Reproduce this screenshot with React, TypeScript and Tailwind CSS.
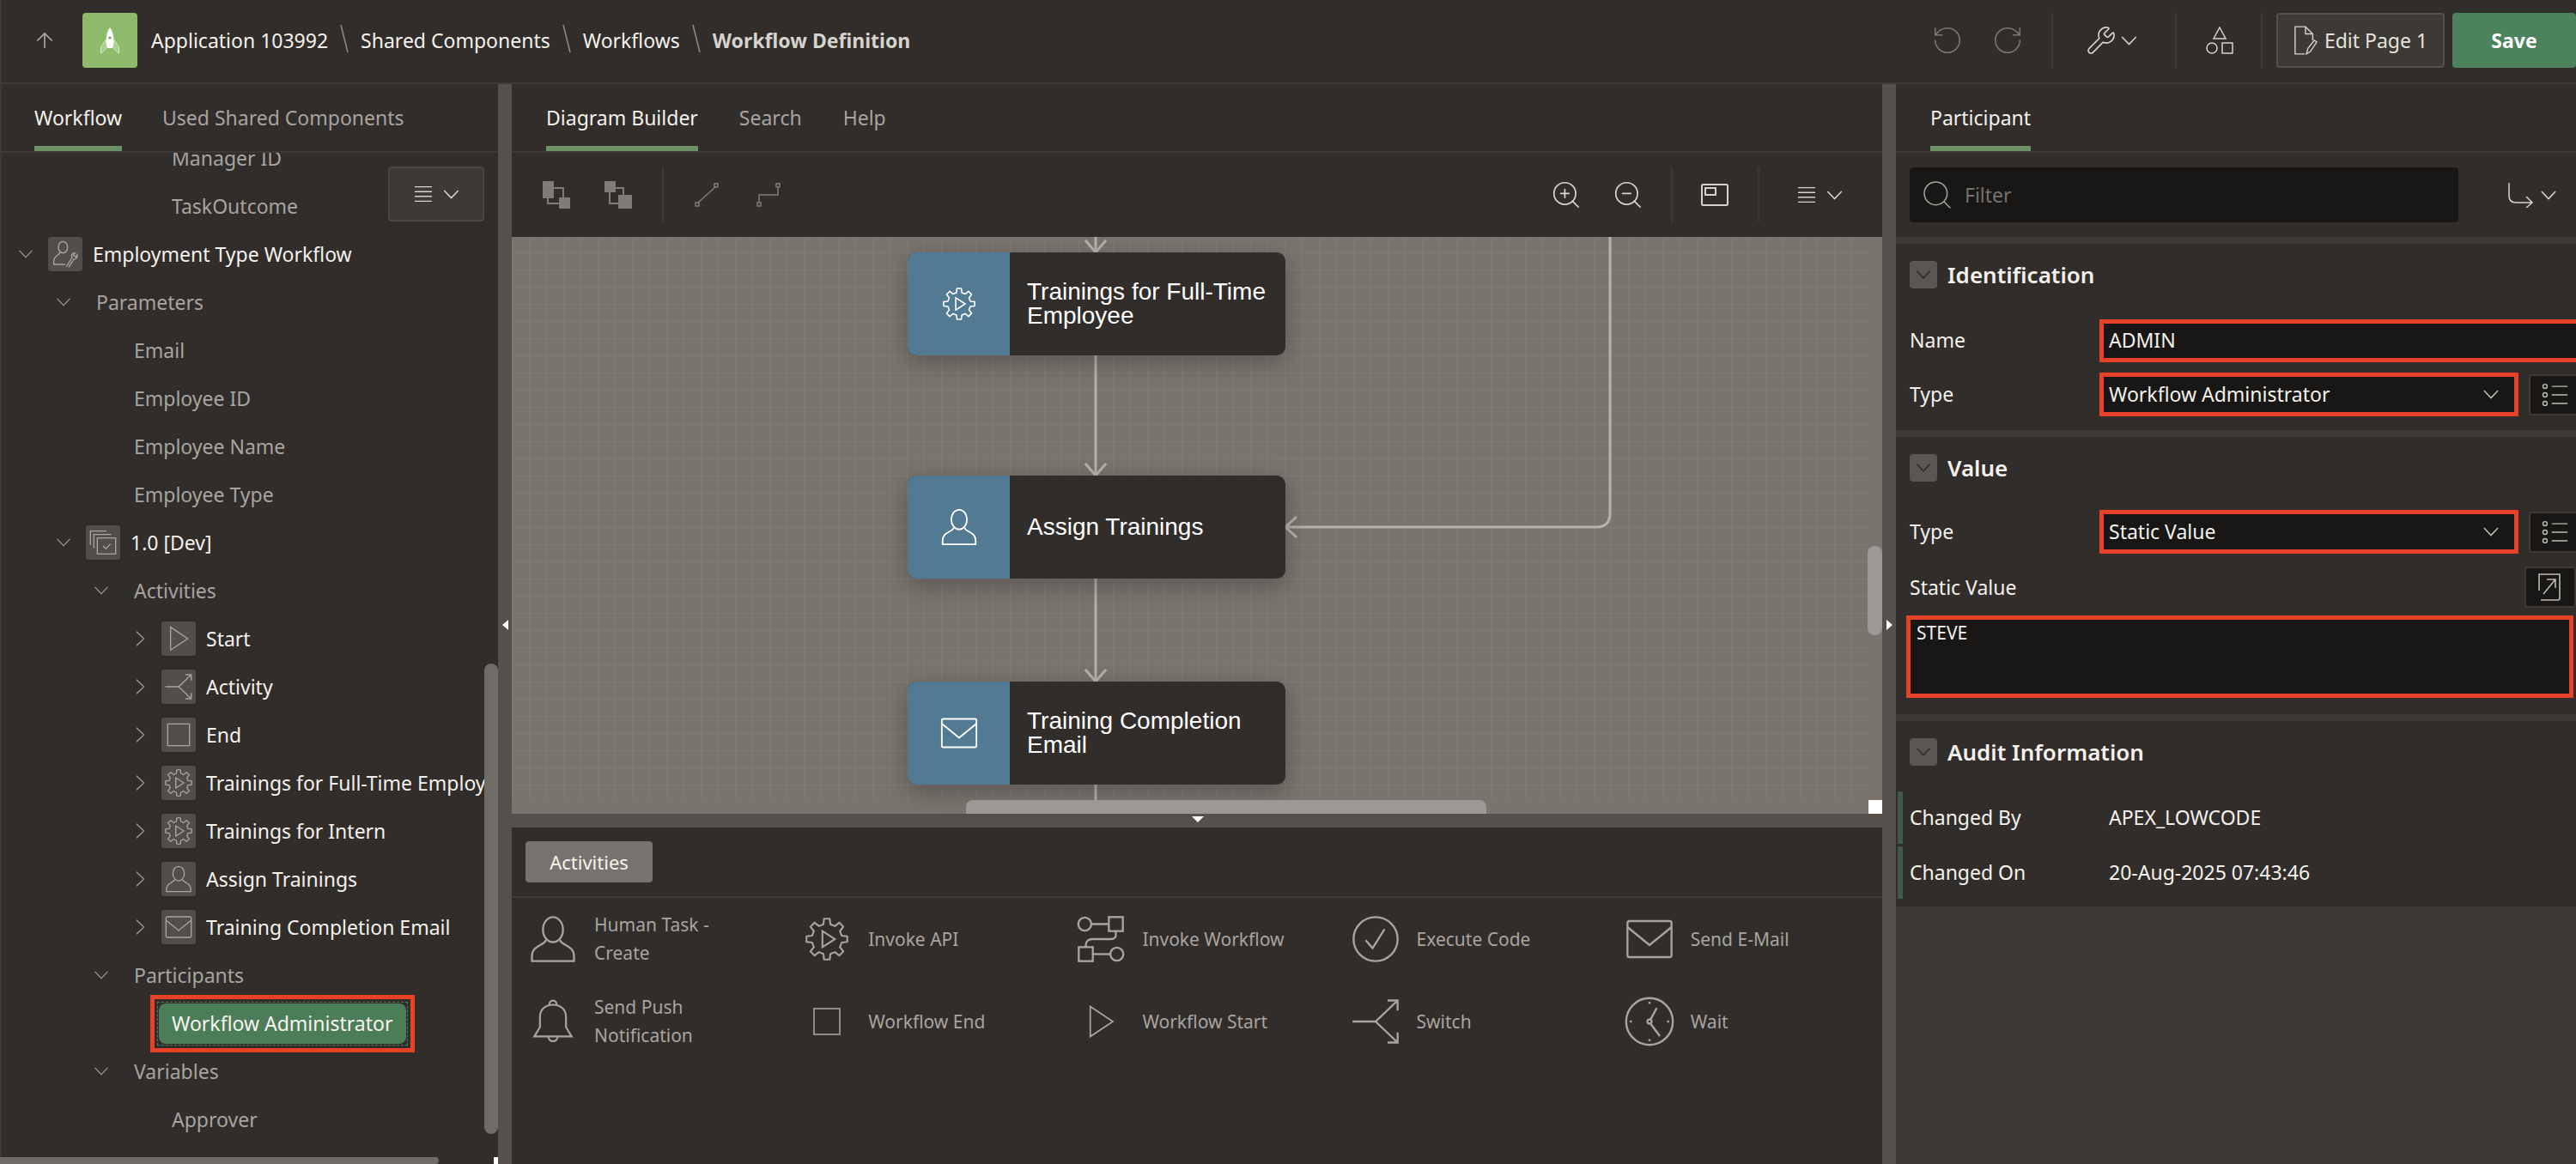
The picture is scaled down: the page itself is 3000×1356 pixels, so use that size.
import { ArrowUp, RotateCcw, RotateCw, Search, Wrench, ZoomIn, ZoomOut } from "lucide-react"
import type { ReactNode } from "react"

type IconProps = { className?: string }

function Svg({ className, box = 48, children }: IconProps & { box?: number; children: ReactNode }) {
    return (
        <svg viewBox={`0 0 ${box} ${box}`} fill="none" stroke="currentColor" strokeWidth="2" className={className}>
            {children}
        </svg>
    )
}

const ChevDown = ({ className = "w-[20px] h-[12px]" }: IconProps) => (
    <svg viewBox="0 0 20 12" fill="none" stroke="currentColor" strokeWidth="1.700" className={`shrink-0 ${className}`}>
        <path d="M1 1 L10 10.500 L19 1" />
    </svg>
)
const ChevRight = ({ className = "w-[12px] h-[20px]" }: IconProps) => (
    <svg viewBox="0 0 12 20" fill="none" stroke="currentColor" strokeWidth="1.700" className={`shrink-0 ${className}`}>
        <path d="M1 1 L10.500 10 L1 19" />
    </svg>
)

// 8 tooth gear outline, same shape in tree, node and palette
function gearPath() {
    const pts: string[] = []
    for (let i = 0; i < 8; i++) {
        const a = (i * Math.PI) / 4 - Math.PI / 2
        const step = Math.PI / 4
        const add = (r: number, t: number) => pts.push(`${(24 + r * Math.cos(a + t)).toFixed(1)} ${(24 + r * Math.sin(a + t)).toFixed(1)}`)
        add(23, -0.14)
        add(23, 0.14)
        add(17, step / 2 - 0.16)
        add(17, step / 2 + 0.16)
    }
    return "M" + pts.join("L") + "Z"
}

const GearPlay = ({ className }: IconProps) => (
    <Svg className={className}>
        <path d={gearPath()} strokeLinejoin="round" />
        <path d="M19 15 L33 24 L19 33 Z" />
    </Svg>
)
const Person = ({ className }: IconProps) => (
    <Svg className={className}>
        <ellipse cx="24" cy="14.5" rx="10" ry="12.5" />
        <path d="M17 25 C15 31 3 30 3 41 V46 H45 V41 C45 30 33 31 31 25" />
    </Svg>
)
const Mail = ({ className }: IconProps) => (
    <Svg className={className}>
        <rect x="2" y="6" width="44" height="36" rx="2" />
        <path d="M2 12 L24 30 L46 12" />
    </Svg>
)
const Triangle = ({ className }: IconProps) => (
    <Svg className={className}>
        <path d="M10 4 L40 24 L10 44 Z" />
    </Svg>
)
const Split = ({ className }: IconProps) => (
    <Svg className={className}>
        <path d="M1 24 H24 L46 3 M24 24 L46 45 M36 3 H46 V13 M46 35 V45 H36" />
    </Svg>
)
const Flow = ({ className }: IconProps) => (
    <Svg className={className}>
        <circle cx="8" cy="9" r="6.5" />
        <rect x="32" y="2" width="14" height="14" />
        <path d="M14 9 H32 M39 16 V20 C39 23 37 24 34 24 H16 C12 24 9 26 9 30 V32" />
        <rect x="2" y="32" width="14" height="14" />
        <circle cx="40" cy="39" r="6.5" />
        <path d="M16 39 H34" />
    </Svg>
)
const CheckCircle = ({ className }: IconProps) => (
    <Svg className={className}>
        <circle cx="24" cy="24" r="22" />
        <path d="M14 25 L21 33 L33 14" />
    </Svg>
)
const Bell = ({ className }: IconProps) => (
    <Svg className={className}>
        <path d="M4 40 L10 30 V19 C10 11 16 6 24 6 C32 6 38 11 38 19 V30 L44 40 Z" />
        <path d="M20 6 C20 0 28 0 28 6 M19 40 C19 47 29 47 29 40" />
    </Svg>
)
const Clock = ({ className }: IconProps) => (
    <Svg className={className}>
        <circle cx="24" cy="24" r="22.5" />
        <circle cx="24" cy="24" r="2" />
        <path d="M25 22 L31 11 M25 26 L34 38 M24 5 V7 M24 41 V43 M5 24 H7 M41 24 H43" />
    </Svg>
)
const Square = ({ className }: IconProps) => (
    <Svg className={className}>
        <rect x="5" y="5" width="38" height="38" />
    </Svg>
)
const Stack = ({ className }: IconProps) => (
    <Svg className={className}>
        <path d="M2 28 V4 H30 M8 34 V10 H38" />
        <rect x="14" y="16" width="32" height="28" />
        <path d="M24 30 L29 35 L37 26" />
    </Svg>
)
const PersonWrench = ({ className }: IconProps) => (
    <Svg className={className}>
        <ellipse cx="20" cy="12" rx="8" ry="10" />
        <path d="M15 21 C14 26 4 27 4 36 V42 H24" />
        <path d="M26 46 L36 30 C33 26 36 22 41 22 L38 26 L42 29 L45 25 C46 30 42 33 39 33 L30 47" />
    </Svg>
)
const ListDetails = ({ className }: IconProps) => (
    <Svg className={className}>
        <circle cx="7" cy="10" r="3.5" />
        <circle cx="7" cy="24" r="3.5" />
        <circle cx="7" cy="38" r="3.5" />
        <path d="M18 10 H44 M18 24 H44 M18 38 H44" />
    </Svg>
)
const LinesIcon = ({ className }: IconProps) => (
    <Svg className={className} box={24}>
        <path d="M0 2 H24 M0 8.700 H24 M0 15.300 H24 M0 22 H24" strokeWidth="1.600" />
    </Svg>
)

function MenuButton({ className = "" }: IconProps) {
    return (
        <div className={`flex items-center gap-[11px] text-[#d6d3ce] ${className}`}>
            <LinesIcon className="w-[24px] h-[20px]" />
            <ChevDown className="w-[19px] h-[11px]" />
        </div>
    )
}

function Tab({ label, active }: { label: string; active?: boolean }) {
    return (
        <div className={`h-full flex items-center border-b-[6px] ${active ? "border-[#6d9167] text-[#f4f1ec]" : "border-transparent text-[#a8a4a0]"}`}>
            <span className="pt-[6px]">{label}</span>
        </div>
    )
}

type RowData = {
    indent: string
    label: string
    open?: boolean
    closed?: boolean
    icon?: ReactNode
    gap?: string
    bright?: boolean
}

const treeIcon = "w-[32px] h-[32px]"

const rows: RowData[] = [
    { indent: "pl-[200px]", label: "Manager ID" },
    { indent: "pl-[200px]", label: "TaskOutcome" },
    { indent: "pl-[20px]", open: true, label: "Employment Type Workflow", bright: true, icon: <PersonWrench className={treeIcon} />, gap: "ml-[16px]" },
    { indent: "pl-[64px]", open: true, label: "Parameters", gap: "ml-[28px]" },
    { indent: "pl-[156px]", label: "Email" },
    { indent: "pl-[156px]", label: "Employee ID" },
    { indent: "pl-[156px]", label: "Employee Name" },
    { indent: "pl-[156px]", label: "Employee Type" },
    { indent: "pl-[64px]", open: true, label: "1.0 [Dev]", bright: true, icon: <Stack className={treeIcon} />, gap: "ml-[16px]" },
    { indent: "pl-[108px]", open: true, label: "Activities", gap: "ml-[28px]" },
    { indent: "pl-[153px]", closed: true, label: "Start", bright: true, icon: <Triangle className={treeIcon} />, gap: "ml-[15px]" },
    { indent: "pl-[153px]", closed: true, label: "Activity", bright: true, icon: <Split className={treeIcon} />, gap: "ml-[15px]" },
    { indent: "pl-[153px]", closed: true, label: "End", bright: true, icon: <Square className={treeIcon} />, gap: "ml-[15px]" },
    { indent: "pl-[153px]", closed: true, label: "Trainings for Full-Time Employee", bright: true, icon: <GearPlay className={treeIcon} />, gap: "ml-[15px]" },
    { indent: "pl-[153px]", closed: true, label: "Trainings for Intern", bright: true, icon: <GearPlay className={treeIcon} />, gap: "ml-[15px]" },
    { indent: "pl-[153px]", closed: true, label: "Assign Trainings", bright: true, icon: <Person className={treeIcon} />, gap: "ml-[15px]" },
    { indent: "pl-[153px]", closed: true, label: "Training Completion Email", bright: true, icon: <Mail className={treeIcon} />, gap: "ml-[15px]" },
    { indent: "pl-[108px]", open: true, label: "Participants", gap: "ml-[28px]" },
]

function TreeRow({ row }: { row: RowData }) {
    return (
        <div className={`h-[56px] flex items-center whitespace-nowrap ${row.indent}`}>
            {row.open && (
                <div className="w-[20px] shrink-0 flex justify-center text-[#8f8b86]">
                    <ChevDown className="w-[18px] h-[10px]" />
                </div>
            )}
            {row.closed && (
                <div className="w-[20px] shrink-0 flex justify-center text-[#8f8b86]">
                    <ChevRight className="w-[11px] h-[18px]" />
                </div>
            )}
            {row.icon ? (
                <div className={`shrink-0 w-[40px] h-[40px] rounded-[4px] bg-[#524e4a] text-[#a8a4a0] flex items-center justify-center ${row.gap}`}>{row.icon}</div>
            ) : null}
            <span className={`${row.icon ? "ml-[12px]" : row.gap ?? ""} ${row.bright ? "text-[#f4f1ec]" : "text-[#a8a4a0]"}`}>{row.label}</span>
        </div>
    )
}

function LeftPanel() {
    return (
        <div className="w-[580px] shrink-0 flex flex-col">
            <div className="h-[80px] shrink-0 flex gap-[47px] pl-[40px] border-b-2 border-[#3d3a36]">
                <Tab label="Workflow" active />
                <Tab label="Used Shared Components" />
            </div>
            <div className="relative flex-1 overflow-hidden">
                <div className="-mt-[22px] w-[564px] overflow-hidden">
                    {rows.map((r) => (
                        <TreeRow key={r.label} row={r} />
                    ))}
                    <div className="h-[56px] flex items-center pl-[175px]">
                        <div className="shrink-0 w-[308px] h-[67px] border-[5px] border-[#e8412a] p-[3px]">
                            <div className="h-full border border-dashed border-[#4c7d59] p-[1px] flex">
                                <div className="flex-1 rounded-[8px] bg-[#4c7d59] text-[#f7f4ef] flex items-center pl-[15px]">Workflow Administrator</div>
                            </div>
                        </div>
                    </div>
                    <TreeRow row={{ indent: "pl-[108px]", open: true, label: "Variables", gap: "ml-[28px]" }} />
                    <TreeRow row={{ indent: "pl-[200px]", label: "Approver" }} />
                </div>
                <div className="absolute left-[452px] top-[16px] w-[112px] h-[64px] rounded-[4px] bg-[#3d3a36] border-2 border-[#4a4743] flex items-center justify-center">
                    <MenuButton />
                </div>
                <div className="absolute left-[564px] top-[595px] w-[16px] h-[548px] rounded-[8px] bg-[#6f6b67]" />
                <div className="absolute left-0 bottom-0 w-[511px] h-[8px] rounded-r-[8px] bg-[#6f6b67]" />
                <div className="absolute right-0 bottom-0 w-[5px] h-[8px] bg-white" />
            </div>
        </div>
    )
}

function Splitter({ dir }: { dir: "left" | "right" }) {
    return (
        <div className="relative w-[16px] shrink-0 bg-[#55504c]">
            <div className={`absolute left-[5px] top-[624px] h-0 w-0 border-y-[6px] border-y-transparent ${dir === "left" ? "border-r-[7px] border-r-white" : "border-l-[7px] border-l-white"}`} />
        </div>
    )
}

function ToolSep() {
    return <div className="w-[2px] h-[64px] bg-[#3d3a36]" />
}

function DiagramNode({ top, icon, lines }: { top: string; icon: ReactNode; lines: string[] }) {
    return (
        <div className={`absolute left-[461px] ${top} w-[440px] h-[120px] rounded-[10px] bg-[#312d2a] flex overflow-hidden shadow-[0_8px_28px_rgba(0,0,0,0.28)]`}>
            <div className="w-[119px] shrink-0 bg-[#527a92] text-white flex items-center justify-center">{icon}</div>
            <div className="flex-1 flex flex-col justify-center pl-[20px] font-['Liberation_Sans',Arial,sans-serif] text-[28px] leading-[28px] text-white">
                {lines.map((l) => (
                    <span key={l}>{l}</span>
                ))}
            </div>
        </div>
    )
}

function Canvas() {
    return (
        <div className="relative h-[672px] shrink-0 overflow-hidden bg-[#7a746e]">
            <div className="w-[1580px] h-[656px] bg-[linear-gradient(to_right,#807b75_1px,transparent_1px),linear-gradient(to_bottom,#807b75_1px,transparent_1px)] bg-[size:20px_20px] bg-[position:0_18px]" />
            {/* connectors */}
            <svg className="absolute inset-0 w-full h-full" fill="none" stroke="#b7b2ac" strokeWidth="3">
                <path d="M680 0 V18 M668 4 L680 18 L692 4" />
                <path d="M680 138 V278 M668 264 L680 278 L692 264" />
                <path d="M680 398 V518 M668 504 L680 518 L692 504" />
                <path d="M680 638 V656" />
                <path d="M1279 0 V322 Q1279 338 1263 338 H901 M914 326 L901 338 L914 350" />
            </svg>
            <DiagramNode top="top-[18px]" icon={<GearPlay className="w-[38px] h-[38px]" />} lines={["Trainings for Full-Time", "Employee"]} />
            <DiagramNode top="top-[278px]" icon={<Person className="w-[44px] h-[44px]" />} lines={["Assign Trainings"]} />
            <DiagramNode top="top-[518px]" icon={<Mail className="w-[44px] h-[44px]" />} lines={["Training Completion", "Email"]} />
            <div className="absolute left-[1579px] top-[360px] w-[17px] h-[104px] rounded-[8px] bg-[#9c9894]" />
            <div className="absolute left-[529px] top-[656px] w-[606px] h-[16px] rounded-t-[8px] bg-[#9c9894]" />
            <div className="absolute left-[1580px] top-[656px] w-[16px] h-[16px] bg-white" />
        </div>
    )
}

type PaletteItem = { icon: ReactNode; lines: string[] }

const paletteItems: PaletteItem[] = [
    { icon: <Person className="w-[56px] h-[56px]" />, lines: ["Human Task -", "Create"] },
    { icon: <GearPlay className="w-[50px] h-[50px]" />, lines: ["Invoke API"] },
    { icon: <Flow className="w-[56px] h-[56px]" />, lines: ["Invoke Workflow"] },
    { icon: <CheckCircle className="w-[56px] h-[56px]" />, lines: ["Execute Code"] },
    { icon: <Mail className="w-[56px] h-[56px]" />, lines: ["Send E-Mail"] },
    { icon: <Bell className="w-[52px] h-[52px]" />, lines: ["Send Push", "Notification"] },
    { icon: <Square className="w-[38px] h-[38px]" />, lines: ["Workflow End"] },
    { icon: <Triangle className="w-[42px] h-[42px]" />, lines: ["Workflow Start"] },
    { icon: <Split className="w-[56px] h-[56px]" />, lines: ["Switch"] },
    { icon: <Clock className="w-[58px] h-[58px]" />, lines: ["Wait"] },
]

function Palette() {
    return (
        <div className="flex-1 flex flex-col">
            <div className="h-[82px] shrink-0 border-b-2 border-[#3d3a36] pl-[16px] pt-[16px]">
                <div className="w-[148px] h-[48px] rounded-[4px] bg-[#77726d] text-[#f7f4ef] text-[22px] flex items-center justify-center">Activities</div>
            </div>
            <div className="grid grid-cols-[repeat(5,319.2px)] auto-rows-[96px] pl-[16px] text-[21px] leading-[33px] text-[#a8a4a0]">
                {paletteItems.map((item) => (
                    <div key={item.lines[0]} className="flex items-center">
                        <div className="w-[64px] shrink-0 flex justify-center">{item.icon}</div>
                        <div className="ml-[16px] flex flex-col whitespace-nowrap">
                            {item.lines.map((l) => (
                                <span key={l}>{l}</span>
                            ))}
                        </div>
                    </div>
                ))}
            </div>
        </div>
    )
}

function CenterPanel() {
    return (
        <div className="w-[1596px] shrink-0 flex flex-col">
            <div className="h-[80px] shrink-0 flex gap-[48px] pl-[40px] border-b-2 border-[#3d3a36]">
                <Tab label="Diagram Builder" active />
                <Tab label="Search" />
                <Tab label="Help" />
            </div>
            <div className="h-[98px] shrink-0 flex items-center">
                <svg viewBox="0 0 32 32" className="ml-[36px] w-[32px] h-[32px]" fill="none" stroke="#7f7b77" strokeWidth="2">
                    <rect x="0" y="0" width="13" height="20" fill="#7f7b77" stroke="none" />
                    <rect x="6" y="8" width="18" height="18" />
                    <rect x="19" y="19" width="13" height="13" fill="#7f7b77" stroke="none" />
                </svg>
                <svg viewBox="0 0 32 32" className="ml-[40px] w-[32px] h-[32px]" fill="none" stroke="#7f7b77" strokeWidth="2">
                    <rect x="0" y="0" width="13" height="13" fill="#7f7b77" stroke="none" />
                    <path d="M13 8 H22 V16 M6 13 V26 H16" />
                    <rect x="16" y="16" width="16" height="16" fill="#7f7b77" stroke="none" />
                </svg>
                <div className="ml-[35px]">
                    <ToolSep />
                </div>
                <svg viewBox="0 0 28 28" className="ml-[36px] w-[28px] h-[28px]" fill="none" stroke="#7f7b77" strokeWidth="1.500">
                    <rect x="23" y="0.800" width="4" height="4" />
                    <rect x="1" y="23" width="4" height="4" />
                    <path d="M24 5 L4 23" />
                </svg>
                <svg viewBox="0 0 28 28" className="ml-[44px] w-[28px] h-[28px]" fill="none" stroke="#7f7b77" strokeWidth="1.500">
                    <rect x="23" y="0.800" width="4" height="4" />
                    <rect x="1" y="23" width="4" height="4" />
                    <path d="M25 5 V14 H3 V23" />
                </svg>
                <ZoomIn size={38} strokeWidth={1.100} className="ml-[896px] text-[#d6d3ce]" />
                <ZoomOut size={38} strokeWidth={1.100} className="ml-[34px] text-[#d6d3ce]" />
                <div className="ml-[31px]">
                    <ToolSep />
                </div>
                <svg viewBox="0 0 32 26" className="ml-[33px] w-[32px] h-[26px]" fill="none" stroke="#d6d3ce" strokeWidth="2">
                    <rect x="1" y="1" width="30" height="24" rx="1.500" />
                    <rect x="5" y="5" width="12" height="8" />
                </svg>
                <div className="ml-[34px]">
                    <ToolSep />
                </div>
                <MenuButton className="ml-[43px]" />
            </div>
            <Canvas />
            <div className="relative h-[16px] shrink-0 bg-[#55504c]">
                <div className="absolute left-[792px] top-[3px] w-0 h-0 border-x-[7px] border-x-transparent border-t-[7px] border-t-white" />
            </div>
            <Palette />
        </div>
    )
}

function RedField({ children, className }: { children?: ReactNode; className?: string }) {
    return <div className={`border-[5px] border-[#e8412a] bg-[#181715] text-[#f4f1ec] ${className}`}>{children}</div>
}

function SelectField({ value }: { value: string }) {
    return (
        <RedField className="shrink-0 w-[488px] h-[51px] flex items-center justify-between pl-[6px] pr-[18px]">
            <span>{value}</span>
            <ChevDown className="w-[18px] h-[11px] text-[#bdb9b4]" />
        </RedField>
    )
}

function SideButton({ children }: { children: ReactNode }) {
    return <div className="ml-[12px] w-[60px] h-[48px] shrink-0 rounded-[4px] bg-[#181715] border-2 border-[#3d3a36] flex items-center pl-[12px] text-[#bdb9b4]">{children}</div>
}

function SectionHead({ title, className }: { title: string; className: string }) {
    return (
        <div className={`flex items-center pl-[16px] ${className}`}>
            <div className="w-[32px] h-[32px] rounded-[4px] bg-[#5a5652] flex items-center justify-center text-[#2a2724]">
                <ChevDown className="w-[18px] h-[10px]" />
            </div>
            <span className="ml-[12px] text-[26px] font-semibold text-[#f4f1ec]">{title}</span>
        </div>
    )
}

function FieldRow({ label, children, className = "" }: { label: string; children: ReactNode; className?: string }) {
    return (
        <div className={`flex items-center pl-[16px] ${className}`}>
            <div className="w-[221px] shrink-0 text-[#f4f1ec]">{label}</div>
            {children}
        </div>
    )
}

function RightPanel() {
    return (
        <div className="flex-1 flex flex-col overflow-hidden">
            <div className="h-[80px] shrink-0 flex pl-[40px] border-b-2 border-[#3d3a36]">
                <Tab label="Participant" active />
            </div>
            <div className="h-[98px] shrink-0 flex items-center pl-[16px]">
                <div className="w-[639px] h-[64px] rounded-[4px] bg-[#181715] flex items-center pl-[12px] text-[#75716d]">
                    <Search size={40} strokeWidth={0.900} className="text-[#a8a4a0]" />
                    <span className="ml-[12px]">Filter</span>
                </div>
                <svg viewBox="0 0 30 30" className="ml-[58px] w-[30px] h-[30px]" fill="none" stroke="#d6d3ce" strokeWidth="1.500">
                    <path d="M1 1 V16 C1 21 4 24 9 24 H28 M21 17 L28 24 L21 30" />
                </svg>
                <ChevDown className="ml-[8px] w-[18px] h-[11px] text-[#d6d3ce]" />
            </div>
            <div className="h-[8px] shrink-0 bg-[#3d3a36]" />
            <SectionHead title="Identification" className="h-[72px] shrink-0" />
            <FieldRow label="Name" className="h-[51px] mt-[15px] shrink-0">
                <RedField className="flex-1 h-[50px] border-r-0 flex items-center pl-[6px]">ADMIN</RedField>
            </FieldRow>
            <FieldRow label="Type" className="h-[51px] mt-[12px] shrink-0">
                <SelectField value="Workflow Administrator" />
                <SideButton>
                    <ListDetails className="w-[34px] h-[34px]" />
                </SideButton>
            </FieldRow>
            <div className="h-[8px] mt-[16px] shrink-0 bg-[#3d3a36]" />
            <SectionHead title="Value" className="h-[72px] shrink-0" />
            <FieldRow label="Type" className="h-[55px] mt-[11px] shrink-0">
                <SelectField value="Static Value" />
                <SideButton>
                    <ListDetails className="w-[34px] h-[34px]" />
                </SideButton>
            </FieldRow>
            <div className="flex items-center justify-between pl-[16px] h-[48px] mt-[13px] shrink-0 text-[#f4f1ec]">
                <span>Static Value</span>
                <SideButton>
                    <svg viewBox="0 0 30 36" className="w-[30px] h-[36px]" fill="none" stroke="#bdb9b4" strokeWidth="1.600">
                        <path d="M3 22 V3 H27 V31 C27 32 26 33 25 33 H5 M8 26 L22 9 M12 9 H22 V19" />
                    </svg>
                </SideButton>
            </div>
            <div className="pl-[12px] pr-[3px] mt-[9px] shrink-0">
                <RedField className="h-[96px] pl-[7px] text-[21px]">STEVE</RedField>
            </div>
            <div className="h-[8px] mt-[19px] shrink-0 bg-[#3d3a36]" />
            <SectionHead title="Audit Information" className="h-[72px] shrink-0" />
            <div className="mt-[10px] ml-[2px] h-[61px] border-l-[6px] border-[#3e5a44] flex items-center pl-[8px] text-[#f4f1ec]">
                <span className="w-[232px]">Changed By</span>
                <span>APEX_LOWCODE</span>
            </div>
            <div className="mt-[3px] ml-[2px] h-[61px] border-l-[6px] border-[#3e5a44] flex items-center pl-[8px] text-[#f4f1ec]">
                <span className="w-[232px]">Changed On</span>
                <span>20-Aug-2025 07:43:46</span>
            </div>
            <div className="flex-1 mt-[9px] bg-[#3d3a36]" />
        </div>
    )
}

function Crumb({ label, bold }: { label: string; bold?: boolean }) {
    return <span className={bold ? "font-bold text-[#d6d3ce]" : "text-[#f4f1ec]"}>{label}</span>
}

function CrumbSep() {
    return (
        <svg viewBox="0 0 10 34" className="mx-[14px] w-[10px] h-[34px] -mt-[4px]" stroke="#8f8b86" strokeWidth="1.500">
            <path d="M1 1 L9 33" />
        </svg>
    )
}

function TopBar() {
    return (
        <div className="h-[98px] shrink-0 flex items-center border-b-2 border-[#3d3a36] pb-[2px]">
            <ArrowUp size={28} strokeWidth={1.5} className="ml-[38px] text-[#a8a4a0]" />
            <div className="ml-[30px] w-[64px] h-[64px] rounded-[4px] bg-[#8dbb6a] flex items-center justify-center">
                <svg viewBox="0 0 24 32" className="w-[24px] h-[32px]">
                    <path d="M12 1 C15 5 16.500 10 16.500 17 L15 25 H9 L7.500 17 C7.500 10 9 5 12 1 Z" fill="#fff" />
                    <path d="M7.500 15 L1.500 24 V31 L8 25 Z M16.500 15 L22.500 24 V31 L16 25 Z" fill="#a9cc8c" stroke="#e4f0da" strokeWidth="0.800" />
                    <circle cx="12" cy="13" r="1.600" fill="#6f9e4d" />
                </svg>
            </div>
            <div className="ml-[16px] flex items-center whitespace-nowrap">
                <Crumb label="Application 103992" />
                <CrumbSep />
                <Crumb label="Shared Components" />
                <CrumbSep />
                <Crumb label="Workflows" />
                <CrumbSep />
                <Crumb label="Workflow Definition" bold />
            </div>
            <div className="ml-auto flex items-center">
                <RotateCcw size={38} strokeWidth={1} className="text-[#7a7672]" />
                <RotateCw size={38} strokeWidth={1} className="ml-[32px] text-[#7a7672]" />
                <div className="ml-[32px]">
                    <ToolSep />
                </div>
                <Wrench size={36} strokeWidth={1.100} className="ml-[38px] text-[#d6d3ce]" />
                <ChevDown className="ml-[5px] w-[19px] h-[11px] text-[#d6d3ce]" />
                <div className="ml-[44px]">
                    <ToolSep />
                </div>
                <svg viewBox="0 0 32 32" className="ml-[34px] w-[32px] h-[32px]" fill="none" stroke="#d6d3ce" strokeWidth="1.500">
                    <path d="M16 1 L23 14 H9 Z" />
                    <circle cx="7" cy="25" r="6" />
                    <rect x="19" y="19" width="12" height="12" />
                </svg>
                <div className="ml-[32px]">
                    <ToolSep />
                </div>
                <div className="ml-[16px] w-[196px] h-[64px] rounded-[4px] bg-[#3d3a36] border-2 border-[#55504c] flex items-center justify-center gap-[8px] text-[#e6e3de]">
                    <svg viewBox="0 0 30 36" className="w-[28px] h-[34px]" fill="none" stroke="#d6d3ce" strokeWidth="1.500">
                        <path d="M14 35 H2 V1 H15 L24 10 V18 M15 1 V10 H24" />
                        <path d="M16 35 L18 28 L26 18 L29 20 L21 32 Z" />
                    </svg>
                    <span>Edit Page 1</span>
                </div>
                <div className="ml-[9px] w-[144px] h-[64px] rounded-[4px] bg-[#4c825c] flex items-center justify-center font-bold text-white">Save</div>
            </div>
        </div>
    )
}

export default function App() {
    return (
        <div className="w-[3000px] h-[1356px] overflow-hidden flex flex-col bg-[#312d2a] shadow-[inset_2px_0_0_#3d3a36] font-['Noto_Sans',sans-serif] text-[23px]">
            <TopBar />
            <div className="flex-1 flex min-h-0">
                <LeftPanel />
                <Splitter dir="left" />
                <CenterPanel />
                <Splitter dir="right" />
                <RightPanel />
            </div>
        </div>
    )
}
